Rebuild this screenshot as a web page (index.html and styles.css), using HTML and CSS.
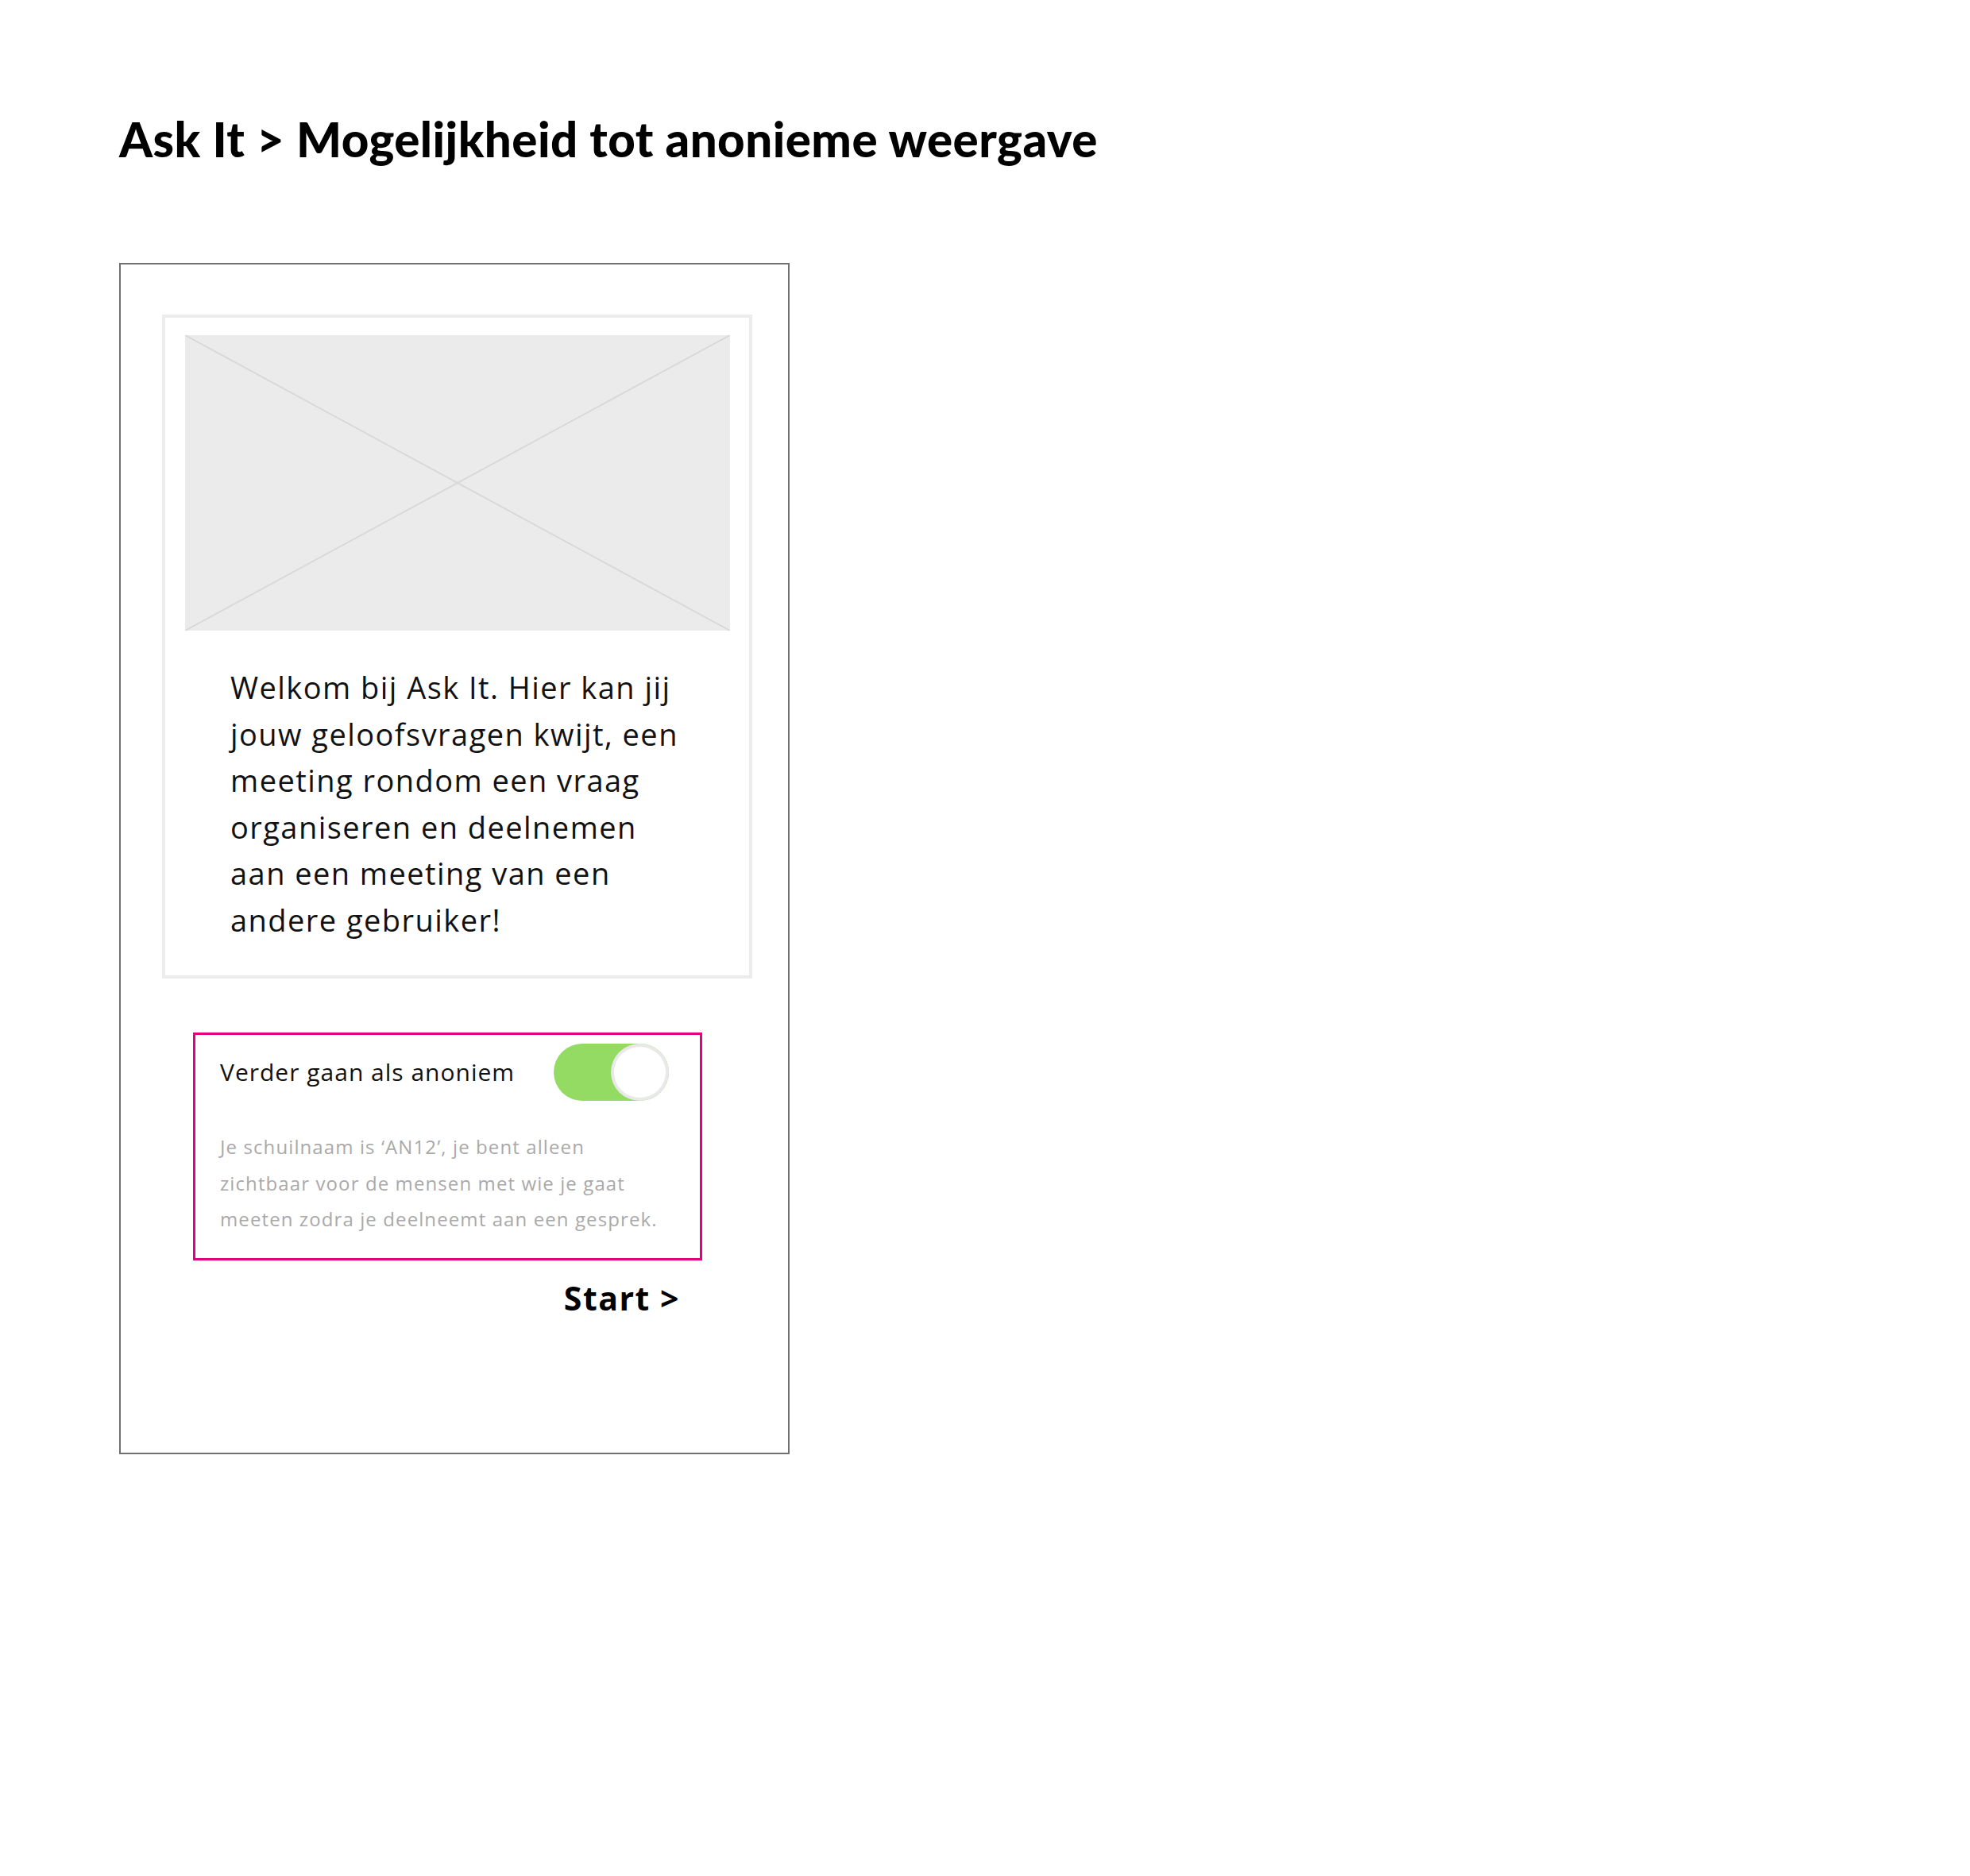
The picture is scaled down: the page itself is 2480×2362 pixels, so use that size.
FILE: index.html
```html
<!DOCTYPE html>
<html lang="nl">
<head>
<meta charset="utf-8">
<title>Ask It &gt; Mogelijkheid tot anonieme weergave</title>
<link rel="stylesheet" href="styles.css">
</head>
<body>
<main class="page">
  <h1 class="page-title">Ask It &gt; Mogelijkheid tot anonieme weergave</h1>

  <section class="phone">
    <div class="card">
      <svg class="placeholder" viewBox="0 0 686 372" preserveAspectRatio="none" aria-hidden="true">
        <rect x="0" y="0" width="686" height="372" fill="#ebebeb"/>
        <line x1="0" y1="0" x2="686" y2="372" stroke="#d8d8d8" stroke-width="1.8"/>
        <line x1="686" y1="0" x2="0" y2="372" stroke="#d8d8d8" stroke-width="1.8"/>
      </svg>
      <p class="intro">Welkom bij Ask It. Hier kan jij jouw geloofsvragen kwijt, een meeting rondom een vraag organiseren en deelnemen aan een meeting van een andere gebruiker!</p>
    </div>

    <div class="anon-box">
      <div class="anon-row">
        <span class="anon-label">Verder gaan als anoniem</span>
        <div class="toggle" role="switch" aria-checked="true">
          <span class="knob"></span>
        </div>
      </div>
      <p class="anon-note">Je schuilnaam is ‘AN12’, je bent alleen<br>zichtbaar voor de mensen met wie je gaat<br>meeten zodra je deelneemt aan een gesprek.</p>
    </div>

    <div class="start-row">
      <span class="start">Start &gt;</span>
    </div>
  </section>
</main>
</body>
</html>
```

FILE: styles.css
```css
html, body {
  margin: 0;
  padding: 0;
  background: #ffffff;
}

.page {
  padding: 140px 0 0 150px;
}

.page-title {
  margin: 0;
  font-family: "Lato", "Open Sans", sans-serif;
  font-weight: 900;
  font-size: 60px;
  line-height: 70px;
  letter-spacing: 0.45px;
  color: #000;
}

.phone {
  margin-top: 121px;
  width: 844px;
  height: 1500px;
  box-sizing: border-box;
  border: 2px solid #707070;
  padding-top: 63px;
}

.card {
  margin-left: 52px;
  width: 743px;
  box-sizing: border-box;
  border: 4px solid #ececec;
}

.placeholder {
  display: block;
  width: 686px;
  height: 372px;
  margin: 22px 24px 0 25px;
}

.intro {
  margin: 0;
  padding: 42px 70px 41px 82px;
  font-family: "Open Sans", sans-serif;
  font-size: 38px;
  line-height: 58.5px;
  letter-spacing: 1.45px;
  color: #111;
}

.anon-box {
  margin: 68px 0 0 91px;
  width: 641px;
  box-sizing: border-box;
  border: 3px solid #e5007d;
  padding: 11px 39px 26px 31px;
}

.anon-row {
  display: flex;
  align-items: center;
  justify-content: space-between;
}

.anon-label {
  font-family: "Open Sans", sans-serif;
  font-size: 30px;
  line-height: 40px;
  letter-spacing: 1px;
  color: #111;
}

.toggle {
  display: flex;
  justify-content: flex-end;
  width: 145px;
  height: 72px;
  border-radius: 36px;
  background: #93db63;
}

.knob {
  width: 73px;
  height: 72px;
  box-sizing: border-box;
  border-radius: 50%;
  border: 4px solid #e9e9e9;
  background: #ffffff;
}

.anon-note {
  margin: 35px 0 0 0;
  white-space: nowrap;
  font-family: "Open Sans", sans-serif;
  font-size: 24px;
  line-height: 45.5px;
  letter-spacing: 1.1px;
  color: #a9a9a9;
}

.start-row {
  display: flex;
  justify-content: flex-end;
  margin: 22px 0 0 91px;
  width: 641px;
  box-sizing: border-box;
  padding-right: 28px;
}

.start {
  font-family: "Open Sans", sans-serif;
  font-weight: 700;
  font-size: 41px;
  line-height: 50px;
  letter-spacing: 1.5px;
  color: #000;
}
```
